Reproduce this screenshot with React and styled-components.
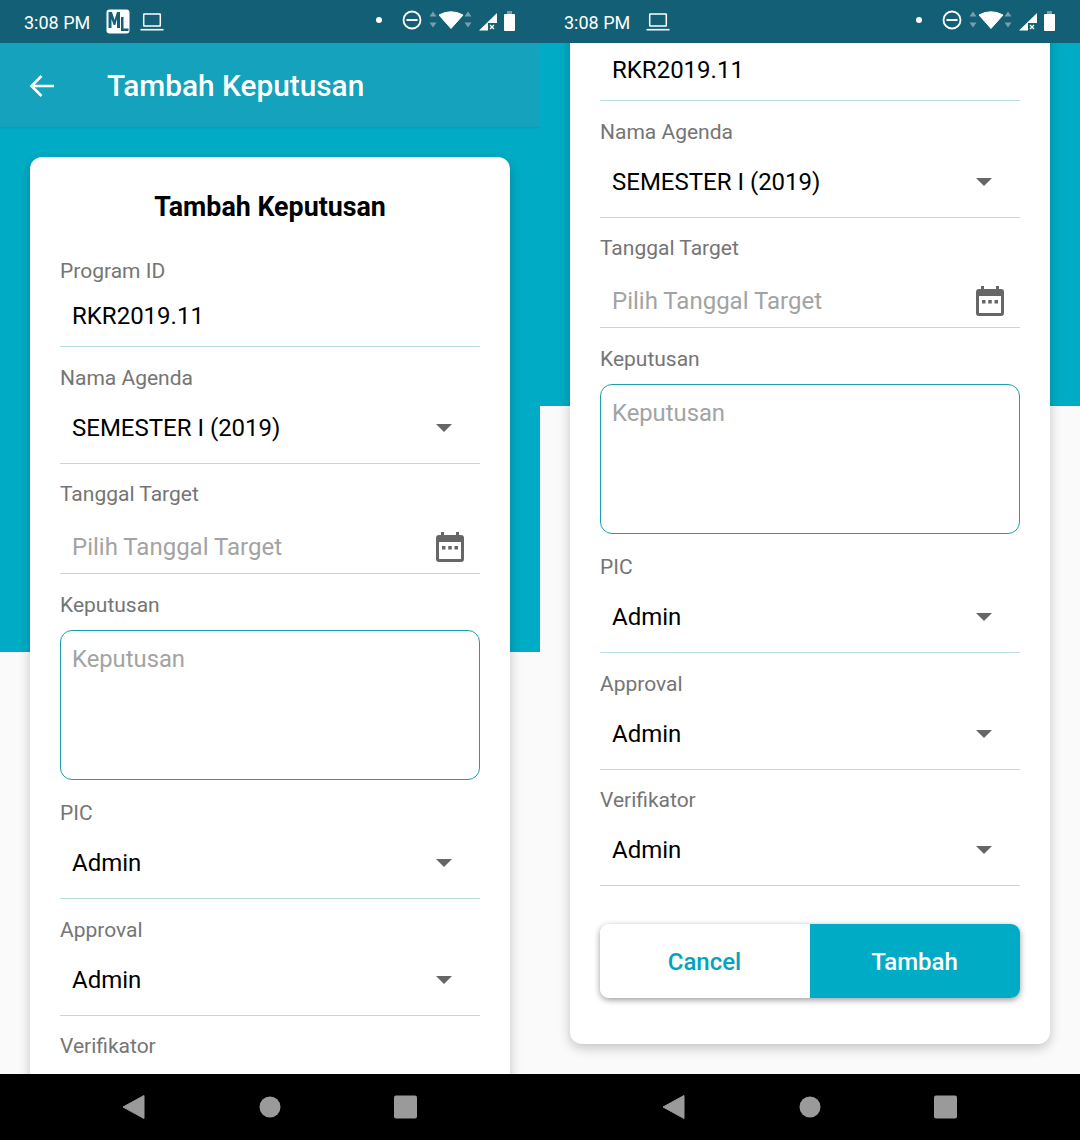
import React from "react";
import styled, { createGlobalStyle } from "styled-components";

const Global = createGlobalStyle`
  html, body { margin: 0; padding: 0; background: #fafafa; }
  body { font-family: Roboto, "Liberation Sans", sans-serif; }
  * { box-sizing: border-box; }
`;

const Page = styled.div`
  display: flex;
  width: 1080px;
  height: 1140px;
  overflow: hidden;
`;
const Screen = styled.section`
  display: flex;
  flex-direction: column;
  width: 540px;
  height: 1140px;
  overflow: hidden;
`;
const StatusBar = styled.header`
  display: flex;
  align-items: center;
  flex: none;
  height: 43px;
  padding: 0 23px 0 24px;
  background: #135f75;
  color: #fff;
  position: relative;
  z-index: 3;
`;
const Clock = styled.span`
  font-size: 18px;
  line-height: 43px;
  padding-top: 1px;
  width: 82px;
  white-space: nowrap;
`;
const StatusLeft = styled.div`
  display: flex;
  align-items: center;
  gap: 10px;
`;
const StatusRight = styled.div`
  margin-left: auto;
  display: flex;
`;
const AppBar = styled.div`
  display: flex;
  align-items: center;
  flex: none;
  height: 84px;
  padding: 2px 0 0 29px;
  gap: 52px;
  background: #14a2bc;
  box-shadow: 0 1px 2px rgba(0, 0, 0, 0.08);
  position: relative;
  z-index: 2;
`;
const AppTitle = styled.h1`
  margin: 0;
  color: #fff;
  font-size: 29.8px;
  font-weight: 500;
  line-height: 36px;
`;
const Main = styled.main`
  flex: 1;
  min-height: 0;
  overflow: hidden;
  padding: 0 30px;
  background: linear-gradient(#00acc5 0 ${(p) => p.$band}px, #fafafa ${(p) => p.$band}px);
`;
const Card = styled.div`
  margin-top: ${(p) => p.$offset}px;
  padding: 0 30px 46px;
  background: #fff;
  border-radius: 12px;
  box-shadow: 0 4px 12px rgba(0, 0, 0, 0.22);
`;
const CardTitle = styled.h2`
  margin: 0;
  padding-top: 33px;
  height: 100px;
  text-align: center;
  color: #000;
  font-size: 26.8px;
  font-weight: 700;
  line-height: 34px;
`;
const Field = styled.div`
  display: flex;
  flex-direction: column;
`;
const Label = styled.label`
  height: 28px;
  margin-top: ${(p) => p.$top}px;
  color: #757575;
  font-size: 21px;
  line-height: 28px;
`;
const Control = styled.div`
  display: flex;
  align-items: center;
  justify-content: space-between;
  height: ${(p) => p.$h}px;
  padding: ${(p) => p.$pt ?? 0}px 16px 0 12px;
  border-bottom: 1px solid #b7dde2;
`;
const Value = styled.span`
  color: ${(p) => (p.$placeholder ? "#a3a3a3" : "#000")};
  font-size: 24px;
  line-height: 32px;
`;
const Caret = styled.span`
  width: 0;
  height: 0;
  margin-right: 12px;
  border-left: 8px solid transparent;
  border-right: 8px solid transparent;
  border-top: 8px solid #666;
`;
const TextArea = styled.div`
  height: 150px;
  margin-top: 11px;
  padding: 12px 11px;
  border: 1px solid #1c9eab;
  border-radius: 12px;
  color: #a3a3a3;
  font-size: 23.8px;
  line-height: 32px;
`;
const ButtonGroup = styled.div`
  display: flex;
  height: 74px;
  margin-top: 38px;
  border-radius: 9px;
  overflow: hidden;
  box-shadow: 0 2px 6px rgba(0, 0, 0, 0.4);
`;
const Button = styled.button`
  flex: 1;
  border: 0;
  padding: 1px 1px 0 0;
  background: ${(p) => (p.$primary ? "#00acc5" : "#fff")};
  color: ${(p) => (p.$primary ? "#fff" : "#00a5bd")};
  font-family: inherit;
  font-size: 24px;
  font-weight: 500;
`;
const NavBar = styled.nav`
  display: flex;
  align-items: center;
  justify-content: center;
  flex: none;
  gap: 112px;
  height: 66px;
  padding: 0 0 1px;
  background: #000;
  position: relative;
  z-index: 3;
`;

const MLIcon = () => (
  <svg width="24" height="25" viewBox="0 0 24 25">
    <rect x="0.5" y="0.5" width="23" height="24" rx="3" fill="#fff" />
    <path d="M2.500 19V3h3.500l2.500 8 2.500-8h3v16h-3V10l-1.700 6H7.700L5.500 10v9z" fill="#135f75" />
    <path d="M15 8h2.500v11.500h5V22H15z" fill="#135f75" />
  </svg>
);
const LaptopIcon = () => (
  <svg width="24" height="18" viewBox="0 0 24 18" fill="none" stroke="#fff">
    <rect x="3.700" y="1" width="16.600" height="12" rx="0.500" strokeWidth="1.500" />
    <path d="M0.500 16.700h23" strokeWidth="1.600" />
  </svg>
);
const StatusIcons = () => (
  <svg width="146" height="24" viewBox="0 0 146 24">
    <circle cx="8" cy="10" r="3" fill="#fff" />
    <circle cx="41" cy="10" r="8.500" fill="none" stroke="#fff" strokeWidth="1.800" />
    <rect x="35.500" y="9" width="11" height="2" fill="#fff" />
    <path d="M62 1.500l3.500 5h-7zM62 17.500l3.500-5h-7zM97 1.500l3.500 5h-7zM97 17.500l3.500-5h-7z" fill="#7c9dab" />
    <path d="M68 5Q80 -1.500 92 5L80 18.500z" fill="#fff" stroke="#fff" strokeWidth="1" strokeLinejoin="round" />
    <path d="M108 20.500L126 3v17.500z" fill="#fff" />
    <rect x="117" y="13" width="10" height="9" fill="#135f75" />
    <path d="M119 15l4 4m0-4l-4 4" stroke="#fff" strokeWidth="1.300" />
    <rect x="133" y="4" width="11" height="17" rx="1" fill="#fff" />
    <rect x="136" y="1" width="5" height="3" fill="#7c9dab" />
  </svg>
);
const BackArrow = () => (
  <svg width="26" height="24" viewBox="0 0 26 24" fill="none" stroke="#fff" strokeWidth="2.600">
    <path d="M25 12H2.500M12.500 2 2.500 12l10 10" />
  </svg>
);
const CalendarIcon = () => (
  <svg width="28" height="30" viewBox="0 0 28 30">
    <path
      fillRule="evenodd"
      fill="#666"
      d="M5 0h3v3h12V0h3v3h2a3 3 0 0 1 3 3v21a3 3 0 0 1-3 3H3a3 3 0 0 1-3-3V6a3 3 0 0 1 3-3h2zM3 10v16.500a.5.500 0 0 0 .5.500h21a.5.500 0 0 0 .5-.500V10z"
    />
    <rect x="6" y="14" width="3.500" height="3.500" fill="#666" />
    <rect x="12.250" y="14" width="3.500" height="3.500" fill="#666" />
    <rect x="18.500" y="14" width="3.500" height="3.500" fill="#666" />
  </svg>
);
const NavBack = () => (
  <svg width="24" height="28" viewBox="0 0 24 28">
    <path d="M22 2.500v23L1 14z" fill="#9a9a9a" stroke="#9a9a9a" strokeLinejoin="round" />
  </svg>
);
const NavHome = () => (
  <svg width="24" height="24" viewBox="0 0 24 24">
    <circle cx="12" cy="12" r="10.500" fill="#9a9a9a" />
  </svg>
);
const NavRecent = () => (
  <svg width="24" height="24" viewBox="0 0 24 24">
    <rect x="0" y="0.500" width="23" height="23" rx="2" fill="#9a9a9a" />
  </svg>
);

function Select({ label, value, top }) {
  return (
    <Field>
      <Label $top={top}>{label}</Label>
      <Control $h={72}>
        <Value>{value}</Value>
        <Caret />
      </Control>
    </Field>
  );
}

function Form() {
  return (
    <>
      <CardTitle>Tambah Keputusan</CardTitle>
      <Field>
        <Label $top={0}>Program ID</Label>
        <Control $h={62}>
          <Value>RKR2019.11</Value>
        </Control>
      </Field>
      <Select label="Nama Agenda" value="SEMESTER I (2019)" top={17} />
      <Field>
        <Label $top={16}>Tanggal Target</Label>
        <Control $h={66} $pt={13}>
          <Value $placeholder>Pilih Tanggal Target</Value>
          <CalendarIcon />
        </Control>
      </Field>
      <Field>
        <Label $top={17}>Keputusan</Label>
        <TextArea>Keputusan</TextArea>
      </Field>
      <Select label="PIC" value="Admin" top={19} />
      <Select label="Approval" value="Admin" top={17} />
      <Select label="Verifikator" value="Admin" top={16} />
      <ButtonGroup>
        <Button>Cancel</Button>
        <Button $primary>Tambah</Button>
      </ButtonGroup>
    </>
  );
}

function Nav() {
  return (
    <NavBar>
      <NavBack />
      <NavHome />
      <NavRecent />
    </NavBar>
  );
}

export default function App() {
  return (
    <Page>
      <Global />
      <Screen>
        <StatusBar>
          <Clock>3:08 PM</Clock>
          <StatusLeft>
            <MLIcon />
            <LaptopIcon />
          </StatusLeft>
          <StatusRight>
            <StatusIcons />
          </StatusRight>
        </StatusBar>
        <AppBar>
          <BackArrow />
          <AppTitle>Tambah Keputusan</AppTitle>
        </AppBar>
        <Main $band={525}>
          <Card $offset={30}>
            <Form />
          </Card>
        </Main>
        <Nav />
      </Screen>
      <Screen>
        <StatusBar>
          <Clock>3:08 PM</Clock>
          <StatusLeft>
            <LaptopIcon />
          </StatusLeft>
          <StatusRight>
            <StatusIcons />
          </StatusRight>
        </StatusBar>
        <Main $band={363}>
          <Card $offset={-132}>
            <Form />
          </Card>
        </Main>
        <Nav />
      </Screen>
    </Page>
  );
}
